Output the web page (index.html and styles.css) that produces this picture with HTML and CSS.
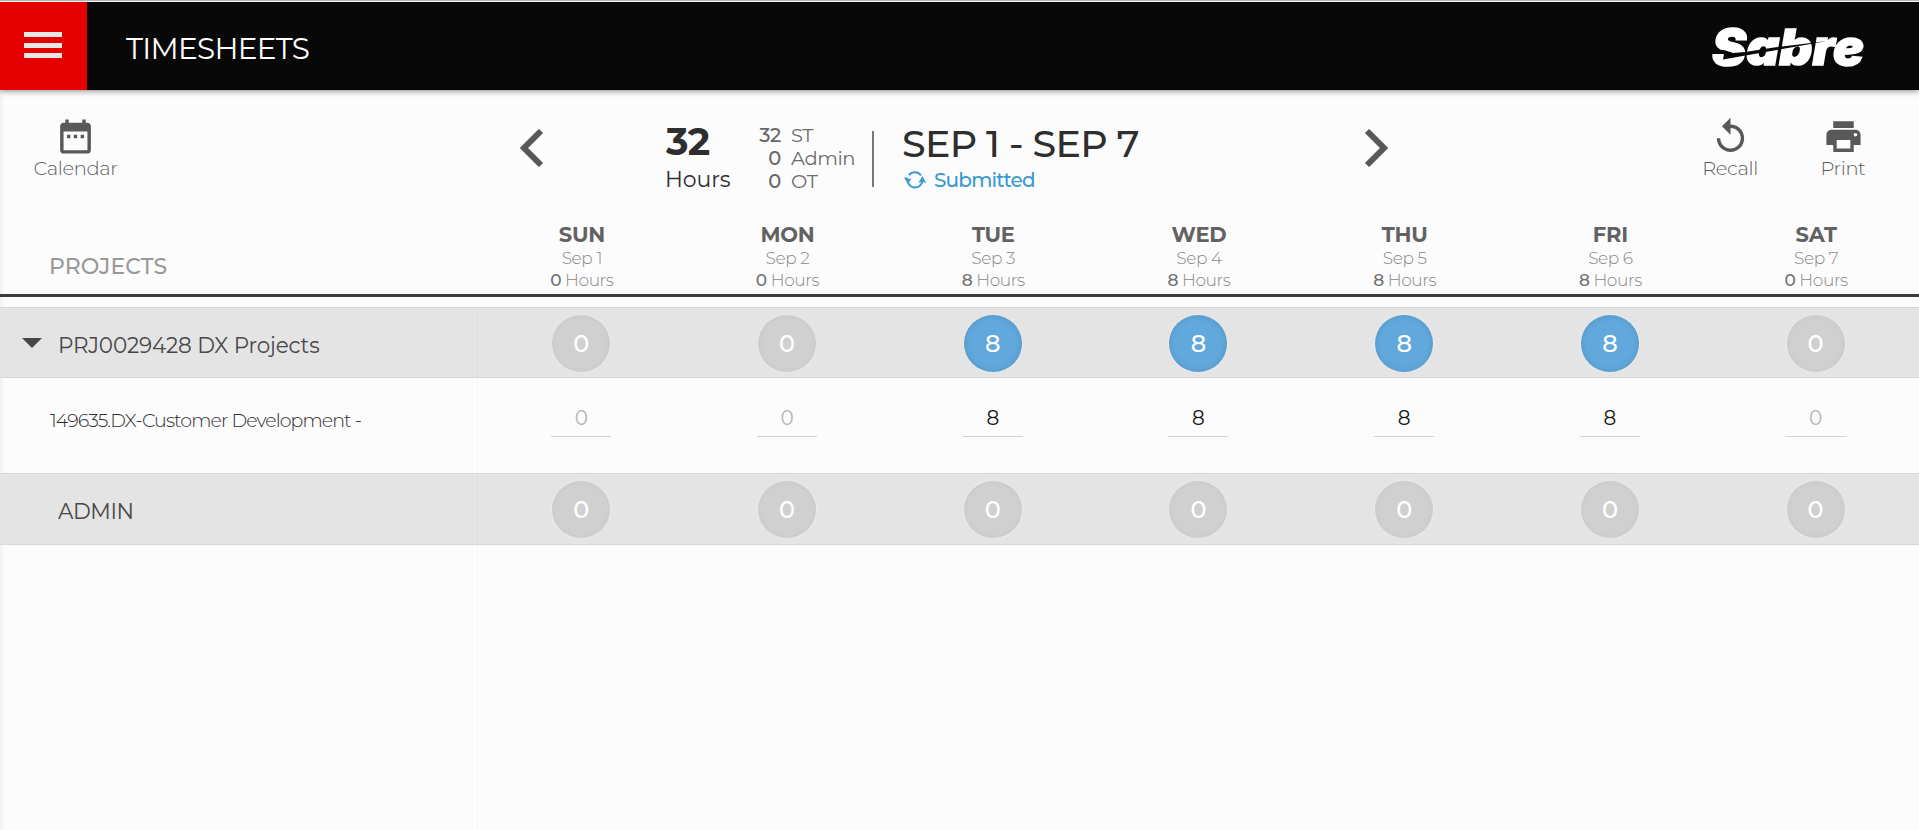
FILE: index.html
```html
<!DOCTYPE html>
<html lang="en">
<head>
<meta charset="utf-8">
<title>Timesheets</title>
<link rel="stylesheet" href="styles.css">
</head>
<body>
<header class="topbar">
  <button class="menu" aria-label="Menu"><span></span><span></span><span></span></button>
  <h1 class="title">TIMESHEETS</h1>
  <svg class="logo" width="170" height="60" viewBox="0 -4 170 60">
    <text x="3" y="44" textLength="152" lengthAdjust="spacingAndGlyphs">Sabre</text>
    <path d="M0 29H15L24 32L36 31L65 26.500L118 20L65 29.500L28 36L14 38.500L15 33H0Z"/>
  </svg>
</header>
<section class="toolbar">
  <div class="tool calendar">
    <svg width="41" height="41" viewBox="0 0 24 24"><path d="M9 11H7v2h2v-2zm4 0h-2v2h2v-2zm4 0h-2v2h2v-2zm2-7h-1V2h-2v2H8V2H6v2H5c-1.100 0-1.990.9-1.990 2L3 20c0 1.100.89 2 2 2h14c1.100 0 2-.9 2-2V6c0-1.100-.9-2-2-2zm0 16H5V9h14v11z"/></svg>
    <span>Calendar</span>
  </div>
  <svg class="chev prev" width="24" height="38" viewBox="0 0 24 38"><path d="M21 2 L4 19 L21 36"/></svg>
  <div class="total"><b>32</b><span>Hours</span></div>
  <dl class="split">
    <dt>32</dt><dd>ST</dd>
    <dt>0</dt><dd>Admin</dd>
    <dt>0</dt><dd>OT</dd>
  </dl>
  <div class="period">
    <h2>SEP 1 - SEP 7</h2>
    <div class="status">
      <svg width="22" height="18" viewBox="0 0 22 18"><path class="arc" d="M5 4A7.500 7.500 0 0 1 17 4.500M17 13.500A7.500 7.500 0 0 1 5 13.500M3.600 8.500C3.700 11 4.200 12 5 13.500M18.400 9C18.300 11 17.800 12.500 17 13.500"/><path d="M0 6.500h3l2 1.500 2.500-.5L4 13zM14.500 11.500L18.500 5 22 12l-3-1z"/></svg>
      <span>Submitted</span>
    </div>
  </div>
  <svg class="chev next" width="24" height="38" viewBox="0 0 24 38"><path d="M3 2 L20 19 L3 36"/></svg>
  <div class="tool recall">
    <svg width="41" height="41" viewBox="0 0 24 24"><path d="M12 5V1L7 6l5 5V7c3.310 0 6 2.690 6 6s-2.690 6-6 6-6-2.690-6-6H4c0 4.420 3.580 8 8 8s8-3.580 8-8-3.580-8-8-8z"/></svg>
    <span>Recall</span>
  </div>
  <div class="tool print">
    <svg width="41" height="41" viewBox="0 0 24 24"><path d="M19 8H5c-1.660 0-3 1.340-3 3v6h4v4h12v-4h4v-6c0-1.660-1.340-3-3-3zm-3 11H8v-5h8v5zm3-7c-.55 0-1-.45-1-1s.45-1 1-1 1 .45 1 1-.45 1-1 1zm-1-9H6v4h12V3z"/></svg>
    <span>Print</span>
  </div>
</section>
<section class="row head">
  <div class="name">PROJECTS</div>
  <div class="day"><b>SUN</b><span>Sep 1</span><span><i>0</i> Hours</span></div>
  <div class="day"><b>MON</b><span>Sep 2</span><span><i>0</i> Hours</span></div>
  <div class="day"><b>TUE</b><span>Sep 3</span><span><i>8</i> Hours</span></div>
  <div class="day"><b>WED</b><span>Sep 4</span><span><i>8</i> Hours</span></div>
  <div class="day"><b>THU</b><span>Sep 5</span><span><i>8</i> Hours</span></div>
  <div class="day"><b>FRI</b><span>Sep 6</span><span><i>8</i> Hours</span></div>
  <div class="day"><b>SAT</b><span>Sep 7</span><span><i>0</i> Hours</span></div>
</section>
<main class="sheet">
  <div class="row group">
    <div class="name"><span class="caret"></span><span>PRJ0029428 DX Projects</span></div>
    <div class="cell"><span class="dot">0</span></div>
    <div class="cell"><span class="dot">0</span></div>
    <div class="cell"><span class="dot on">8</span></div>
    <div class="cell"><span class="dot on">8</span></div>
    <div class="cell"><span class="dot on">8</span></div>
    <div class="cell"><span class="dot on">8</span></div>
    <div class="cell"><span class="dot">0</span></div>
  </div>
  <div class="row task">
    <div class="name"><span>149635.DX-Customer Development -</span></div>
    <div class="cell"><span class="entry">0</span></div>
    <div class="cell"><span class="entry">0</span></div>
    <div class="cell"><span class="entry set">8</span></div>
    <div class="cell"><span class="entry set">8</span></div>
    <div class="cell"><span class="entry set">8</span></div>
    <div class="cell"><span class="entry set">8</span></div>
    <div class="cell"><span class="entry">0</span></div>
  </div>
  <div class="row group admin">
    <div class="name"><span class="adm-name">ADMIN</span></div>
    <div class="cell"><span class="dot">0</span></div>
    <div class="cell"><span class="dot">0</span></div>
    <div class="cell"><span class="dot">0</span></div>
    <div class="cell"><span class="dot">0</span></div>
    <div class="cell"><span class="dot">0</span></div>
    <div class="cell"><span class="dot">0</span></div>
    <div class="cell"><span class="dot">0</span></div>
  </div>
  <div class="row rest"><div class="name"></div></div>
</main>
</body>
</html>
```
FILE: styles.css
```css
* { box-sizing: border-box; }
body {
  margin: 0;
  height: 830px;
  overflow: hidden;
  display: flex;
  flex-direction: column;
  font-family: Montserrat, Inter, "Open Sans", sans-serif;
  color: #2e2e2e;
  background: linear-gradient(90deg, #f1f1f1, #fcfcfc 5px);
}
h1, h2, dl, dd { margin: 0; }
.topbar {
  height: 90px;
  flex: none;
  display: flex;
  align-items: stretch;
  background: #080808;
  border-top: 1px solid #b5b3b5;
  box-shadow: inset 0 1px #f4f4f4, inset 0 -1px #000, 0 1px 6px rgba(0, 0, 0, .45);
}
.menu {
  width: 87px;
  margin: 1px 0 0;
  border: 0;
  padding: 30px 24px 32px;
  background: #e50000;
  display: flex;
  flex-direction: column;
  justify-content: space-between;
}
.menu span { height: 5px; width: 38px; background: #ebe6e6; }
.title {
  flex: 1;
  padding-left: 39px;
  font-size: 29.500px;
  font-weight: 450;
  line-height: 95px;
  letter-spacing: -0.7px;
  color: #fff;
}
.logo { margin: 16px 40px 0 0; }
.logo text { font: italic 900 49px Inter, sans-serif; fill: #fff; stroke: #fff; stroke-width: 1.500px; }
.logo path { fill: #080808; }

.toolbar {
  height: 120px;
  flex: none;
  display: flex;
  align-items: flex-start;
  padding-top: 26px;
}
.tool {
  display: flex;
  flex-direction: column;
  align-items: center;
  font-size: 19.500px;
  font-weight: 300;
  line-height: 22px;
  letter-spacing: -0.4px;
  color: #5c5c5c;
}
.tool svg { fill: #585858; flex: none; }
.calendar { margin-left: 20px; width: 110px; padding-left: 1px; }
.recall { margin-left: 287px; width: 110px; }
.print { margin-left: 3px; width: 110px; }
.chev { fill: none; stroke: #585858; stroke-width: 6; margin-top: 13px; }
.prev { margin-left: 390px; }
.total { width: 92px; margin-left: 122px; display: flex; flex-direction: column; }
.total b { font-size: 38px; line-height: 46px; margin-top: 3px; letter-spacing: -.5px; }
.total span { font-size: 22px; line-height: 28px; margin: 1px 0 0 -1px; letter-spacing: -.1px; }
.split {
  margin-top: 8px;
  width: 114px;
  display: grid;
  grid-template-columns: 23px 1fr;
  column-gap: 9px;
  grid-auto-rows: 23px;
  font-size: 19.500px;
  line-height: 23px;
  color: #666;
}
.split dt { text-align: right; font-weight: 500; letter-spacing: -.3px; }
.split dd { color: #6c6c6c; white-space: nowrap; letter-spacing: -.45px; padding-left: 1px; }
.period {
  margin-top: 15px;
  height: 56px;
  border-left: 2px solid #777;
  padding-left: 28px;
  width: 492px;
}
.period h2 { font-size: 38px; font-weight: 550; line-height: 46px; margin-top: -10px; letter-spacing: -.65px; }
.status {
  display: flex;
  align-items: center;
  gap: 8px;
  padding-left: 2px;
  font-size: 20px;
  font-weight: 500;
  line-height: 24px;
  letter-spacing: -.8px;
  color: #3a9ad0;
  margin-top: 1px;
}
.status svg { fill: #3a9ad0; }
.status .arc { fill: none; stroke: #3a9ad0; stroke-width: 2; }

.row { display: grid; grid-template-columns: 478px repeat(7, 1fr); padding-right: 1px; }
.head {
  height: 87px;
  flex: none;
  border-bottom: 3px solid #3d3a3c;
}
.head .name { padding: 42px 0 0 49px; font-size: 22px; font-weight: 500; line-height: 30px; letter-spacing: .1px; color: #999; }
.day { display: flex; flex-direction: column; align-items: center; padding: 12px 0 0 2px; font-size: 17px; font-weight: 350; line-height: 22px; letter-spacing: -.4px; color: #888; }
.day b { font-size: 21px; font-weight: 700; line-height: 25px; letter-spacing: -.2px; color: #626262; }
.day i { font-style: normal; font-weight: 500; color: #707070; }

.sheet { flex: 1; display: flex; flex-direction: column; padding-top: 10px; }
.group { height: 71px; background: #e4e4e4; border: solid #d6d6d6; border-width: 1px 0; }
.name { border-right: 1px solid rgba(0, 0, 0, .025); }
.head .name { border: 0; }
.group .name { display: flex; align-items: center; padding: 5px 0 0 22px; font-size: 21.500px; color: #484848; letter-spacing: -.15px; }
.caret { border: 10px solid transparent; border-top-color: #484848; border-bottom: 0; margin: -4px 16px 0 0; }
.admin { height: 72px; }
.admin .name { padding-top: 4px; letter-spacing: -.4px; }
.adm-name { margin-left: 36px; }
.cell { display: flex; justify-content: center; align-items: center; padding-left: 1px; }
.dot {
  width: 58px;
  height: 57px;
  margin-bottom: -2px;
  border-radius: 50%;
  background: #d0d0d0;
  box-shadow: inset 0 0 6px rgba(0, 0, 0, .04), 0 0 3px #eee;
  color: #fff;
  font-size: 24px;
  font-weight: 500;
  line-height: 58px;
  text-align: center;
}
.admin .dot { margin-bottom: 0; }
.on { background: #61a8dc; box-shadow: inset 0 0 7px rgba(0, 0, 0, .12), 0 0 3px #eee; }
.task { height: 95px; }
.task .name { padding: 30px 0 0 50px; font-size: 19px; line-height: 26px; font-weight: 300; letter-spacing: -.92px; }
.task .cell { align-items: flex-start; padding-top: 26px; }
.entry { width: 60px; height: 33px; border-bottom: 1px solid #d3d3d3; text-align: center; font-size: 20px; line-height: 29px; font-weight: 400; color: #b4b4b4; }
.entry.set { color: #111; }
.rest { flex: 1; }
```
